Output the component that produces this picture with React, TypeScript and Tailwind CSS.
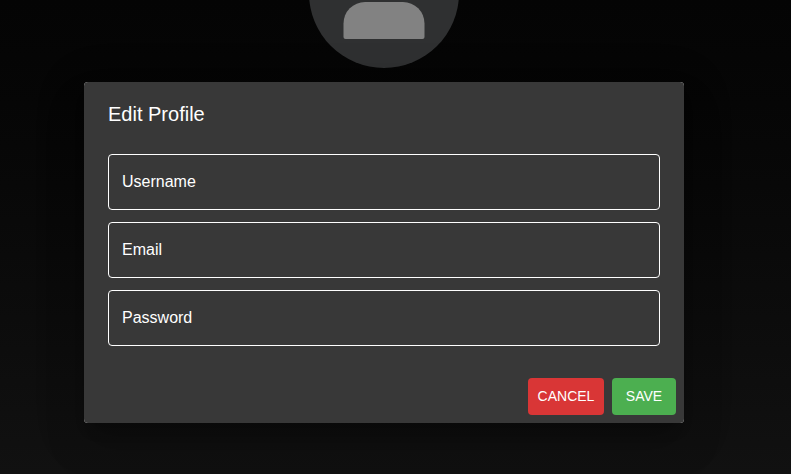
import React from "react";

const fields = [
  { id: "username", label: "Username", type: "text" },
  { id: "email", label: "Email", type: "email" },
  { id: "password", label: "Password", type: "password" },
];

function Avatar() {
  return (
    <svg
      className="block h-[68px] w-[150px]"
      viewBox="0 82 150 68"
      aria-hidden="true"
    >
      <circle cx="75" cy="75" r="75" fill="#2f3031" />
      <path
        d="M56 84h38a21.500 21.500 0 0 1 21.500 21.500v13.500a2 2 0 0 1-2 2h-77a2 2 0 0 1-2-2v-13.500a21.500 21.500 0 0 1 21.500-21.500z"
        fill="#828282"
      />
    </svg>
  );
}

function EditProfileDialog() {
  return (
    <div
      role="dialog"
      aria-labelledby="dialog-title"
      className="w-full max-w-[600px] rounded bg-white shadow-[0_11px_15px_-7px_rgba(0,0,0,0.2),0_24px_38px_3px_rgba(0,0,0,0.14),0_9px_46px_8px_rgba(0,0,0,0.12)]"
    >
      <form className="rounded bg-[#383838]" onSubmit={(e) => e.preventDefault()}>
        <h2 id="dialog-title" className="px-6 py-4 text-xl leading-8">
          Edit Profile
        </h2>
        <div className="flex flex-col gap-3 px-6 pt-2 pb-6">
          {fields.map((field) => (
            <div key={field.id} className="relative">
              <input
                id={field.id}
                type={field.type}
                className="peer block h-14 w-full rounded border border-white bg-transparent px-3 text-base outline-none"
                placeholder=" "
              />
              <label
                htmlFor={field.id}
                className="pointer-events-none absolute inset-y-0 left-0 flex items-center px-[14px] text-base peer-focus:hidden peer-[:not(:placeholder-shown)]:hidden"
              >
                {field.label}
              </label>
            </div>
          ))}
        </div>
        <div className="flex justify-end gap-2 p-2">
          <button
            type="button"
            className="min-w-[76px] rounded bg-[#d93636] px-2 pt-[6px] pb-[7px] text-sm leading-6"
          >
            CANCEL
          </button>
          <button
            type="submit"
            className="min-w-16 rounded bg-[#4caf50] px-2 pt-[6px] pb-[7px] text-sm leading-6"
          >
            SAVE
          </button>
        </div>
      </form>
    </div>
  );
}

export default function App() {
  return (
    <main className="flex min-h-screen flex-col items-center gap-[14px] bg-linear-to-b from-[#040404] to-[#111111] pr-[23px] font-['Liberation_Sans',Arial,sans-serif] text-white">
      <Avatar />
      <EditProfileDialog />
    </main>
  );
}
